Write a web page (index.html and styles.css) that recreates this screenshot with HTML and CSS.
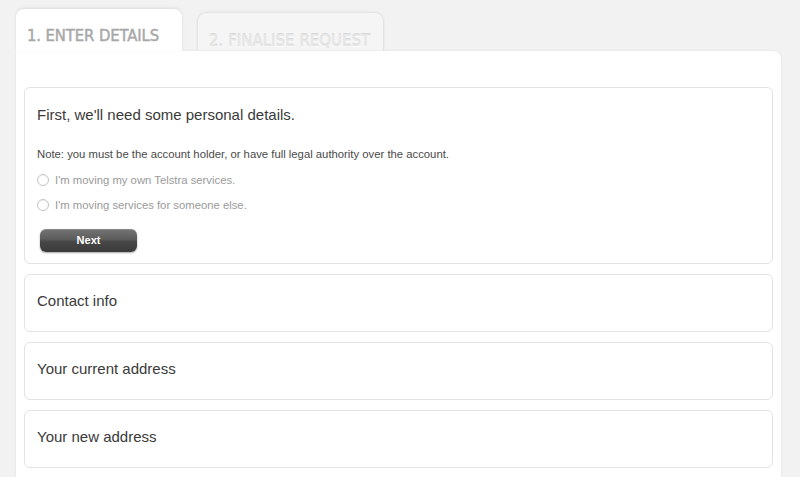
FILE: index.html
```html
<!DOCTYPE html>
<html>
<head>
<meta charset="utf-8">
<link rel="stylesheet" href="styles.css">
</head>
<body>
<div class="page">
  <div class="tabs">
    <div class="tab tab-active">1. ENTER DETAILS</div>
    <div class="tab tab-inactive">2. FINALISE REQUEST</div>
  </div>
  <div class="panel">
    <section class="card first">
      <h2 class="card-title">First, we'll need some personal details.</h2>
      <p class="note">Note: you must be the account holder, or have full legal authority over the account.</p>
      <label class="radio-row"><span class="radio"></span>I'm moving my own Telstra services.</label>
      <label class="radio-row second"><span class="radio"></span>I'm moving services for someone else.</label>
      <button class="btn-next">Next</button>
    </section>
    <section class="card collapsed"><h2 class="card-title">Contact info</h2></section>
    <section class="card collapsed"><h2 class="card-title">Your current address</h2></section>
    <section class="card collapsed"><h2 class="card-title">Your new address</h2></section>
  </div>
</div>
</body>
</html>
```
FILE: styles.css
```css
html, body {
  margin: 0;
  padding: 0;
  background: #f2f2f2;
  font-family: "Liberation Sans", Arial, sans-serif;
}
.page {
  width: 800px;
  height: 477px;
  overflow: hidden;
}
.tabs {
  display: flex;
  align-items: flex-start;
  gap: 16px;
  padding: 9px 0 0 16px;
  height: 42px;
  box-sizing: content-box;
}
.tab {
  box-sizing: border-box;
  font-family: "DejaVu Sans Condensed", "DejaVu Sans", sans-serif;
  font-stretch: condensed;
  font-weight: normal;
  font-size: 16.5px;
  letter-spacing: -0.1px;
  -webkit-text-stroke: 0.45px currentColor;
  border-radius: 8px 8px 0 0;
  padding-left: 11px;
  white-space: nowrap;
}
.tab-active {
  width: 166px;
  height: 42px;
  background: #fff;
  color: #a8a8a8;
  line-height: 54px;
  box-shadow: 0 -1px 3px rgba(0,0,0,0.10);
  position: relative;
  z-index: 2;
}
.tab-inactive {
  width: 185px;
  height: 38px;
  margin-top: 4px;
  background: #f5f5f5;
  color: #e6e6e6;
  line-height: 56px;
  letter-spacing: 0.1px;
  text-shadow: 0 1px 0 #fff, 0 -1px 0 #d4d4d4;
  box-shadow: 0 0 3px rgba(0,0,0,0.16);
}
.panel {
  width: 765px;
  margin-left: 16px;
  background: #fff;
  border-radius: 0 8px 0 0;
  padding: 36px 8px 8px;
  box-sizing: border-box;
  height: 440px;
  box-shadow: 0 0 3px rgba(0,0,0,0.08);
  position: relative;
  z-index: 1;
  display: flex;
  flex-direction: column;
  gap: 10px;
}
.card {
  border: 1px solid #e3e3e3;
  border-radius: 6px;
  padding: 0 12px 12px;
  background: #fff;
}
.card.first {
  padding-bottom: 11px;
}
.card.collapsed {
  padding-bottom: 20px;
}
.card-title {
  margin: 0;
  padding-top: 17px;
  font-size: 15px;
  line-height: 20px;
  font-weight: normal;
  color: #3a3a3a;
}
.collapsed .card-title {
  padding-top: 16px;
}
.note {
  margin: 22px 0 0;
  font-size: 11.3px;
  line-height: 14px;
  color: #4a4a4a;
}
.radio-row {
  display: flex;
  align-items: center;
  gap: 6px;
  margin-top: 10px;
  height: 18px;
  font-size: 11.3px;
  color: #9a9a9a;
}
.radio-row.second {
  margin-top: 7px;
}
.radio {
  width: 10px;
  height: 10px;
  border: 1px solid #c4c4c4;
  border-radius: 50%;
  background: #fff;
  box-shadow: inset 0 1px 1px rgba(0,0,0,0.06);
}
.btn-next {
  display: block;
  margin: 15px 0 0 3px;
  width: 97px;
  height: 23px;
  border: none;
  border-radius: 6px;
  background: linear-gradient(#747474 0%, #5c5c5c 45%, #474747 55%, #3a3a3a 100%);
  box-shadow: 0 1px 2px rgba(0,0,0,0.35), inset 0 1px 0 rgba(255,255,255,0.15);
  color: #fff;
  font-family: "Liberation Sans", Arial, sans-serif;
  font-weight: bold;
  font-size: 11px;
  line-height: 21px;
  padding: 0;
}
```
